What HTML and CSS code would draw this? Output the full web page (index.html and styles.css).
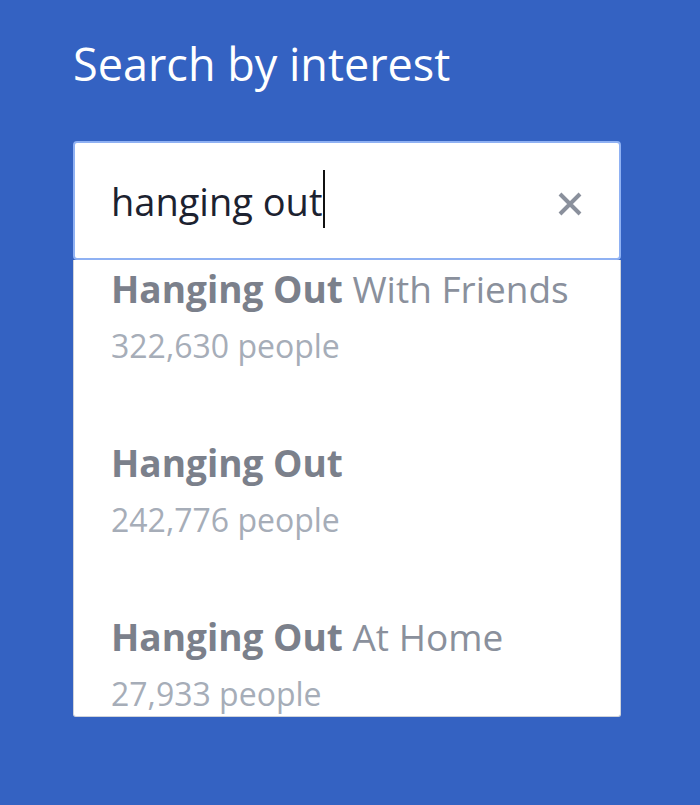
FILE: index.html
```html
<!DOCTYPE html>
<html lang="en">
<head>
    <meta charset="UTF-8" />
    <meta name="viewport" content="width=device-width, initial-scale=1.0" />
    <title>Search by interest</title>
    <link rel="stylesheet" href="styles.css">
</head>
<body>
    <div class="panel">
        <h1 class="panel-title">Search by interest</h1>
        <div class="search">
            <div class="search-box">
                <span class="search-value">hanging out</span><span class="caret"></span>
                <span class="search-clear">
                    <svg width="26" height="26" viewBox="0 0 26 26">
                        <path d="M3 3 L23 23 M23 3 L3 23" stroke="#8a909c" stroke-width="4" fill="none" />
                    </svg>
                </span>
            </div>
            <div class="results">
                <ul class="results-list">
                    <li class="result">
                        <div class="result-name"><b>Hanging Out</b> With Friends</div>
                        <div class="result-count">322,630 people</div>
                    </li>
                    <li class="result">
                        <div class="result-name"><b>Hanging Out</b></div>
                        <div class="result-count">242,776 people</div>
                    </li>
                    <li class="result">
                        <div class="result-name"><b>Hanging Out</b> At Home</div>
                        <div class="result-count">27,933 people</div>
                    </li>
                </ul>
            </div>
        </div>
    </div>
</body>
</html>
```

FILE: styles.css
```css
html,
body {
    margin: 0;
    padding: 0;
    height: 100%;
    background-color: #3462c2;
    font-family: "Open Sans", "Noto Sans", sans-serif;
}

.panel {
    padding: 36px 79px 0 73px;
}

.panel-title {
    margin: 0 0 49px;
    color: #fff;
    font-size: 45px;
    font-weight: 400;
    line-height: 56px;
}

.search-box {
    box-sizing: border-box;
    display: flex;
    align-items: center;
    height: 119px;
    padding: 0 36px 0 36px;
    background: #fff;
    border: 2px solid #8fb1f3;
    border-radius: 4px;
}

.search-value {
    color: #1c2230;
    font-size: 38px;
}

.caret {
    width: 2px;
    height: 58px;
    margin: 0 0 4px 1px;
    background: #111;
}

.search-clear {
    display: flex;
    margin: 6px 0 0 auto;
}

.results {
    height: 456px;
    overflow: hidden;
    background: #fff;
    border: 1px solid #cfd3db;
    border-top: none;
    border-radius: 0 0 3px 3px;
}

.results-list {
    list-style: none;
    margin: -31px 0 0;
    padding: 0;
}

.result {
    padding: 36px 37px 35px;
}

.result-name {
    color: #8a909c;
    font-size: 37px;
    line-height: 48px;
}

.result-name b {
    color: #7b808b;
    font-weight: 700;
}

.result-count {
    margin-top: 11px;
    color: #a6adb8;
    font-size: 32px;
    line-height: 44px;
}
```
